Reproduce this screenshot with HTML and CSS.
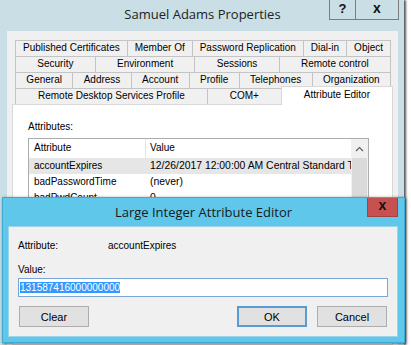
FILE: index.html
```html
<!DOCTYPE html>
<html lang="en">
<head>
  <meta charset="UTF-8">
  <title>Samuel Adams Properties</title>
  <link rel="stylesheet" href="styles.css">
</head>
<body>
  <div class="props">
    <div class="titlebar">
      <span></span>
      <div class="title">Samuel Adams Properties</div>
      <div class="caption-btns">
        <span class="cap help">?</span>
        <span class="cap close">x</span>
      </div>
    </div>

    <div class="client">
      <div class="tabs">
        <div class="tab-row">
          <div class="tab">Published Certificates</div>
          <div class="tab">Member Of</div>
          <div class="tab">Password Replication</div>
          <div class="tab">Dial-in</div>
          <div class="tab">Object</div>
        </div>
        <div class="tab-row">
          <div class="tab">Security</div>
          <div class="tab">Environment</div>
          <div class="tab">Sessions</div>
          <div class="tab">Remote control</div>
        </div>
        <div class="tab-row">
          <div class="tab">General</div>
          <div class="tab">Address</div>
          <div class="tab">Account</div>
          <div class="tab">Profile</div>
          <div class="tab">Telephones</div>
          <div class="tab">Organization</div>
        </div>
        <div class="tab-row">
          <div class="tab">Remote Desktop Services Profile</div>
          <div class="tab">COM+</div>
          <div class="tab selected">Attribute Editor</div>
        </div>
      </div>

      <div class="tab-panel">
        <div class="label">Attributes:</div>
        <div class="listview">
          <div class="lv-body">
            <div class="lv-head">
              <span class="c1">Attribute</span>
              <span class="c2">Value</span>
            </div>
            <div class="lv-row active">
              <span class="c1">accountExpires</span>
              <span class="c2">12/26/2017 12:00:00 AM Central Standard Time</span>
            </div>
            <div class="lv-row">
              <span class="c1">badPasswordTime</span>
              <span class="c2">(never)</span>
            </div>
            <div class="lv-row">
              <span class="c1">badPwdCount</span>
              <span class="c2">0</span>
            </div>
          </div>
          <div class="scrollbar">
            <div class="sb-arrow">
              <svg width="9" height="6" viewBox="0 0 9 6"><path d="M1 5 L4.5 1.5 L8 5" fill="none" stroke="#606060" stroke-width="1.2"/></svg>
            </div>
            <div class="sb-track"></div>
          </div>
        </div>
      </div>
    </div>
  </div>

  <div class="dialog">
    <div class="titlebar dlg-titlebar">
      <span></span>
      <div class="title">Large Integer Attribute Editor</div>
      <div class="caption-btns">
        <span class="dlg-close">x</span>
      </div>
    </div>
    <div class="dlg-body">
      <div class="field">
        <span class="field-label">Attribute:</span>
        <span>accountExpires</span>
      </div>
      <div class="value-label">Value:</div>
      <div class="textbox"><span class="sel">131587416000000000</span></div>
      <div class="buttons">
        <button class="btn">Clear</button>
        <span class="spacer"></span>
        <button class="btn default">OK</button>
        <button class="btn">Cancel</button>
      </div>
    </div>
  </div>
</body>
</html>
```

FILE: styles.css
```css
* {
  margin: 0;
  padding: 0;
  box-sizing: border-box;
}

body {
  position: relative;
  width: 411px;
  height: 345px;
  overflow: hidden;
  background-color: #fff;
  font-family: 'Liberation Sans', Arial, sans-serif;
  font-size: 10px;
  color: #000;
}

/* back window */
.props {
  width: 404px;
  height: 345px;
  padding: 0 6px 0 7px;
  display: flex;
  flex-direction: column;
  background-color: #c9dee5;
  box-shadow: 2px 0 2px rgba(0, 0, 0, 0.65);
}

.titlebar {
  height: 31px;
  display: grid;
  grid-template-columns: 1fr auto 1fr;
  align-items: start;
}

.title {
  padding-top: 5px;
  font-family: 'Open Sans', sans-serif;
  font-size: 13px;
  color: #222;
  white-space: nowrap;
}

.caption-btns {
  justify-self: end;
  display: flex;
  margin-right: -1px;
}

.cap {
  height: 20px;
  border: 1px solid #7d7d7d;
  border-top: none;
  font-weight: bold;
  font-size: 13px;
  line-height: 18px;
  text-align: center;
  color: #111;
}

.help {
  width: 27px;
}

.close {
  width: 43px;
  border-left: none;
  font-size: 14px;
  line-height: 16px;
}

.client {
  flex: 1;
  display: flex;
  flex-direction: column;
  padding: 9px 5px 0 5px;
  background-color: #f0f0f0;
}

/* tabs */
.tabs {
  padding: 0 2px 0 3px;
}

.tab-row {
  display: flex;
  height: 16px;
}

.tab {
  flex: 1 1 auto;
  padding: 0 4px;
  border-top: 1px solid #c4c4c4;
  border-left: 1px solid #c4c4c4;
  line-height: 14px;
  text-align: center;
  white-space: nowrap;
  background-color: #f0f0f0;
}

.tab:last-child {
  border-right: 1px solid #c4c4c4;
}

.tab.selected {
  position: relative;
  z-index: 1;
  height: 19px;
  margin: -2px -2px -1px 0;
  padding-top: 1px;
  background-color: #fff;
  border-color: #d9d9d9;
}

.tab-panel {
  flex: 1;
  padding: 15px 0 0 15px;
  background-color: #fff;
  border: 1px solid #d9d9d9;
}

.label {
  line-height: 14px;
}

.listview {
  width: 341px;
  height: 80px;
  margin-top: 4px;
  display: flex;
  border: 1px solid #acacac;
}

.lv-body {
  flex: 1;
  overflow: hidden;
}

.lv-head,
.lv-row {
  display: flex;
  white-space: nowrap;
}

.lv-head {
  height: 19px;
  line-height: 18px;
}

.lv-row {
  height: 16px;
  line-height: 16px;
}

.lv-row.active {
  background-color: #e6e6e6;
}

.c1 {
  width: 116px;
  flex: none;
  padding-left: 5px;
}

.c2 {
  padding-left: 5px;
}

.lv-row .c2 {
  font-size: 10.4px;
}

.lv-head .c2 {
  border-left: 1px solid #e5e5e5;
  padding-left: 4px;
}

.scrollbar {
  width: 17px;
  display: flex;
  flex-direction: column;
  background-color: #f0f0f0;
}

.sb-arrow {
  height: 19px;
  display: flex;
  align-items: center;
  justify-content: center;
}

.sb-track {
  flex: 1;
  margin: 0 1px;
  background-color: #dadada;
}

/* modal dialog */
.dialog {
  position: absolute;
  left: 2px;
  top: 197px;
  width: 403px;
  height: 146px;
  background-color: #5fc8ea;
  border: 1px solid #3ea9d2;
  box-shadow: 1px 1px 3px rgba(0, 0, 0, 0.6);
}

.dlg-titlebar {
  height: 28px;
}

.dlg-titlebar .title {
  padding-top: 5px;
  font-size: 13px;
  color: #1a1a1a;
}

.dlg-titlebar .caption-btns {
  margin-right: 6px;
}

.dlg-close {
  width: 31px;
  height: 19px;
  background-color: #c75050;
  border: 1px solid #a84040;
  border-top: none;
  font-weight: bold;
  font-size: 14px;
  line-height: 15px;
  text-align: center;
  color: #111;
}

.dlg-body {
  height: 111px;
  margin: 0 6px 0 5px;
  padding: 12px 9px 0 9px;
  background-color: #f0f0f0;
  border: 1px solid #9fd3e8;
}

.field {
  display: flex;
  line-height: 14px;
}

.field-label {
  width: 90px;
}

.value-label {
  margin-top: 10px;
  line-height: 14px;
}

.textbox {
  height: 19px;
  margin-top: 1px;
  padding: 2px 1px;
  background-color: #fff;
  border: 1px solid #7aa6d6;
  font-size: 10px;
  line-height: 13px;
}

.sel {
  background-color: #3399ff;
  color: #fff;
}

.buttons {
  display: flex;
  margin-top: 9px;
  padding-left: 1px;
}

.spacer {
  flex: 1;
}

.btn {
  width: 70px;
  height: 21px;
  margin-right: 10px;
  background-color: #e1e1e1;
  border: 1px solid #adadad;
  font-family: 'Liberation Sans', Arial, sans-serif;
  font-size: 11px;
  color: #000;
}

.btn:last-child {
  margin-right: 1px;
}

.btn.default {
  border: 2px solid #5b9bd5;
}
```
